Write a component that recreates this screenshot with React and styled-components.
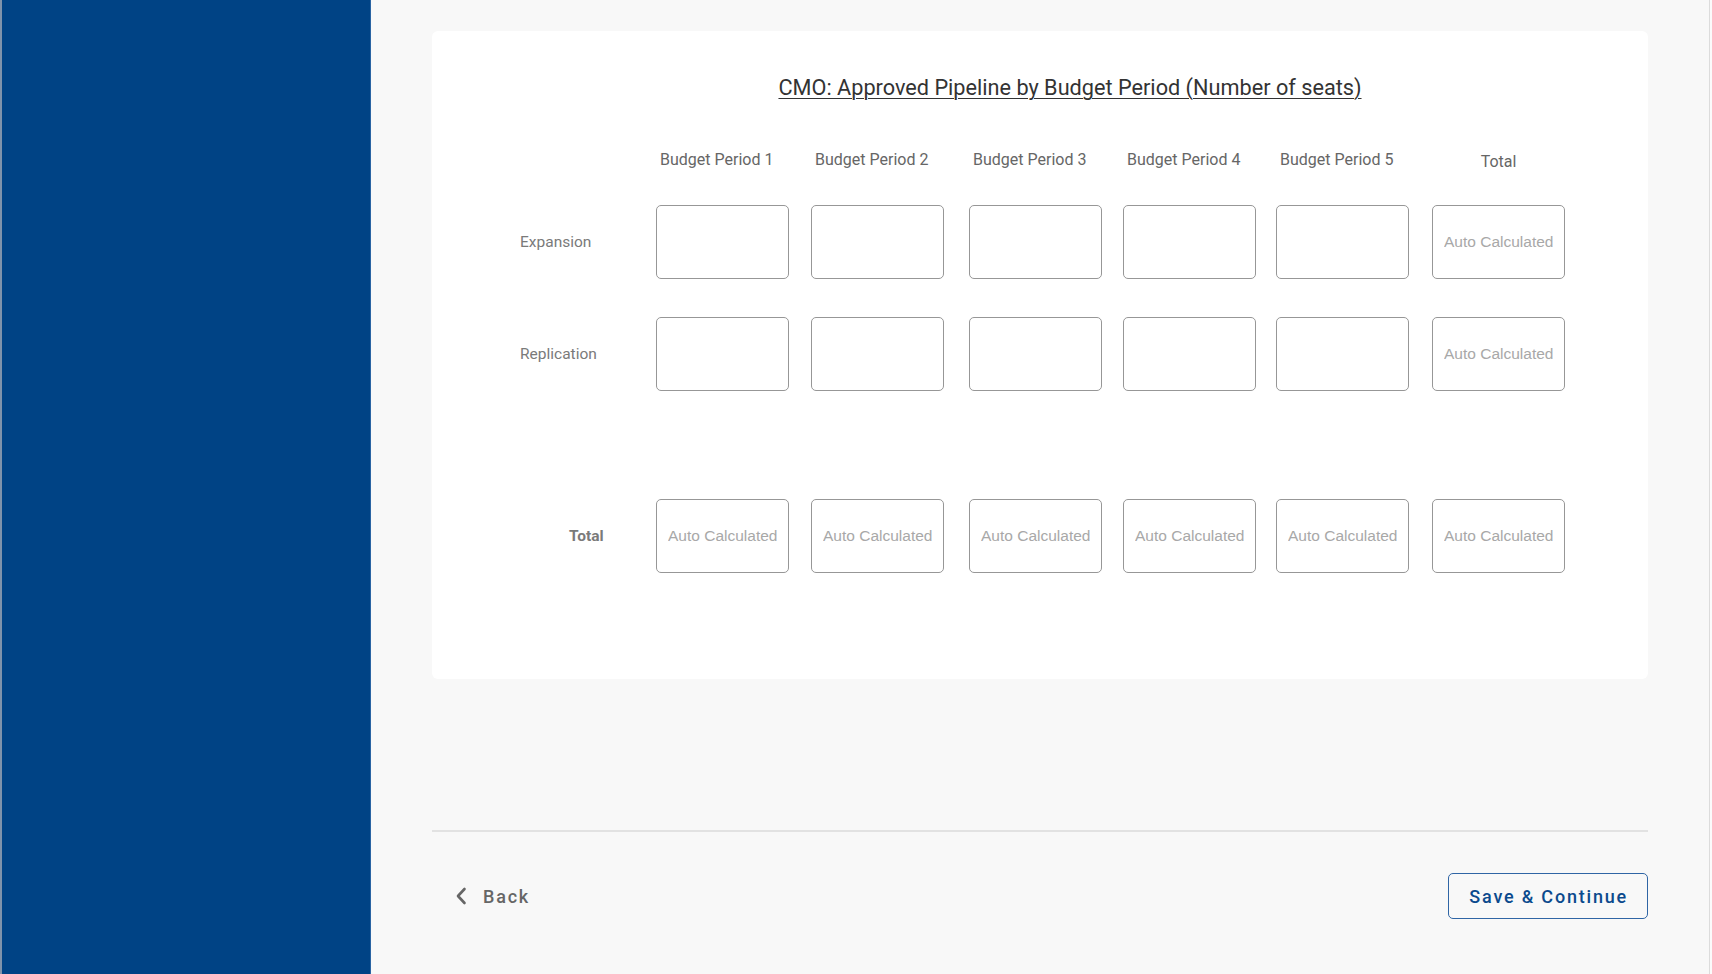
import React from "react";
import styled, { createGlobalStyle } from "styled-components";

const GlobalStyle = createGlobalStyle`
  html, body { margin: 0; padding: 0; }
  body {
    font-family: Roboto, "Noto Sans", "Liberation Sans", sans-serif;
    background: #f8f8f8;
    overflow: hidden;
  }
  * { box-sizing: border-box; }
`;

const Page = styled.div`
  display: flex;
  width: 100vw;
  height: 100vh;
`;

const Sidebar = styled.aside`
  flex: 0 0 371px;
  background: #004385;
  border-left: 2px solid #7f93ab;
  border-right: 1px solid #2a64a3;
`;

const Main = styled.main`
  flex: 1;
  display: flex;
  flex-direction: column;
  padding: 31px 61px 0 61px;
  background: #f8f8f8;
`;

const ScrollEdge = styled.div`
  flex: 0 0 3px;
  background: #fbfbfb;
  border-left: 1px solid #dcdcdc;
`;

const Card = styled.section`
  background: #ffffff;
  border-radius: 6px;
  padding: 45px 0 106px 88px;
`;

const Title = styled.h2`
  margin: 0;
  padding-right: 28px;
  text-align: center;
  font-size: 21.7px;
  line-height: 24px;
  font-weight: 400;
  color: #333333;
  text-decoration: underline;
  text-decoration-thickness: 1px;
  text-underline-offset: 3px;
`;

const Table = styled.div`
  display: flex;
  flex-direction: column;
  margin-top: 50px;
`;

const Row = styled.div`
  display: grid;
  grid-template-columns: 136px 155px 158px 154px 153px 156px 133px;
  align-items: center;
  margin-top: ${(p) => p.$gap || 0}px;
`;

const ColHead = styled.div`
  height: 20px;
  font-size: 16px;
  line-height: 20px;
  color: #666666;
  white-space: nowrap;
  padding-left: ${(p) => (p.$center ? 0 : 4)}px;
  padding-top: ${(p) => (p.$center ? 2 : 0)}px;
  text-align: ${(p) => (p.$center ? "center" : "left")};
`;

const RowLabel = styled.div`
  font-size: 15.5px;
  line-height: 20px;
  color: #7a7a7a;
  font-weight: ${(p) => (p.$strong ? 700 : 400)};
  padding-left: ${(p) => (p.$strong ? 49 : 0)}px;
`;

const Cell = styled.input`
  width: 133px;
  height: 74px;
  border: 1.5px solid #979797;
  border-radius: 5px;
  background: #ffffff;
  padding: 0 11px;
  font-family: "Liberation Sans", Arial, sans-serif;
  font-size: 15.5px;
  color: #444;
  outline: none;
  &::placeholder {
    color: #a8a8a8;
  }
`;

const Divider = styled.hr`
  margin: 151px 0 0 0;
  border: none;
  height: 2px;
  background: #e2e2e2;
`;

const Footer = styled.div`
  display: flex;
  justify-content: space-between;
  align-items: center;
  margin-top: 41px;
`;

const BackButton = styled.button`
  display: flex;
  align-items: center;
  gap: 16px;
  padding: 0 0 0 23px;
  background: none;
  border: none;
  font-family: Roboto, sans-serif;
  font-size: 18px;
  font-weight: 500;
  letter-spacing: 1.8px;
  color: #666666;
  cursor: pointer;
`;

const SaveButton = styled.button`
  height: 46px;
  padding: 0 19px 0 20px;
  background: transparent;
  border: 1.5px solid #2f65a5;
  border-radius: 5px;
  font-family: Roboto, sans-serif;
  font-size: 18px;
  font-weight: 500;
  letter-spacing: 1.8px;
  color: #0b4a8d;
  cursor: pointer;
`;

const periods = ["Budget Period 1", "Budget Period 2", "Budget Period 3", "Budget Period 4", "Budget Period 5"];

const DataRow = ({ label, gap, strong, allAuto }) => (
  <Row $gap={gap}>
    <RowLabel $strong={strong}>{label}</RowLabel>
    {periods.map((p) => (
      <Cell
        key={p}
        readOnly={allAuto}
        placeholder={allAuto ? "Auto Calculated" : ""}
        aria-label={`${label} ${p}`}
      />
    ))}
    <Cell readOnly placeholder="Auto Calculated" aria-label={`${label} Total`} />
  </Row>
);

export default function App() {
  return (
    <>
      <GlobalStyle />
      <Page>
        <Sidebar />
        <Main>
          <Card>
            <Title>CMO: Approved Pipeline by Budget Period (Number of seats)</Title>
            <Table>
              <Row>
                <div />
                {periods.map((p) => (
                  <ColHead key={p}>{p}</ColHead>
                ))}
                <ColHead $center>Total</ColHead>
              </Row>
              <DataRow label="Expansion" gap={35} />
              <DataRow label="Replication" gap={38} />
              <DataRow label="Total" gap={108} strong allAuto />
            </Table>
          </Card>
          <Divider />
          <Footer>
            <BackButton>
              <svg width="12" height="18" viewBox="0 0 12 18" fill="none">
                <path d="M9.5 2 L3 9 L9.5 16" stroke="#666" strokeWidth="2.6" strokeLinecap="round" strokeLinejoin="round" />
              </svg>
              Back
            </BackButton>
            <SaveButton>Save &amp; Continue</SaveButton>
          </Footer>
        </Main>
        <ScrollEdge />
      </Page>
    </>
  );
}
